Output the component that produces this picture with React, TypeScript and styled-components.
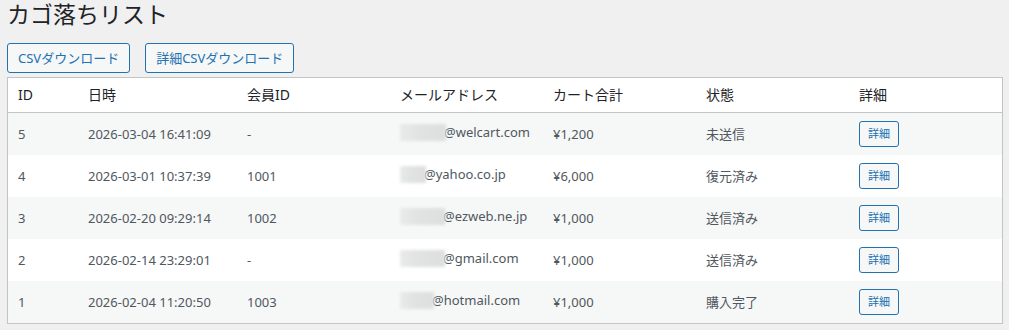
import React from "react";
import styled, { createGlobalStyle } from "styled-components";

const GlobalStyle = createGlobalStyle`
  body {
    margin: 0;
    background: #f0f0f1;
    font-family: "Noto Sans", "Noto Sans CJK JP", sans-serif;
    color: #3c434a;
  }
`;

const Wrap = styled.div`
  padding: 0 6px 0 7px;
`;

const Title = styled.h1`
  margin: 0;
  font-family: "Noto Sans", "Noto Sans CJK JP", sans-serif;
  font-size: 23px;
  font-weight: 400;
  line-height: 28px;
  color: #1d2327;
`;

const Actions = styled.div`
  display: flex;
  gap: 15px;
  margin-top: 15px;
`;

const Button = styled.button<{ $small?: boolean }>`
  box-sizing: border-box;
  height: ${(p) => (p.$small ? "26px" : "30px")};
  padding: ${(p) => (p.$small ? "0 8px" : "0 10px")};
  font-family: "Noto Sans", "Noto Sans CJK JP", sans-serif;
  font-size: ${(p) => (p.$small ? "11px" : "13px")};
  line-height: ${(p) => (p.$small ? "16px" : "18px")};
  color: #2271b1;
  background: #f6f7f7;
  border: 1px solid #2271b1;
  border-radius: 3px;
  cursor: pointer;
  white-space: nowrap;
`;

const Table = styled.table`
  width: 100%;
  margin-top: 4px;
  table-layout: fixed;
  border-collapse: separate;
  border-spacing: 0;
  background: #fff;
  border: 1px solid #c3c4c7;
  box-shadow: 0 1px 1px rgba(0, 0, 0, 0.04);
`;

const Th = styled.th`
  box-sizing: border-box;
  height: 35px;
  padding: 0 10px;
  text-align: left;
  font-weight: 400;
  font-size: 14px;
  line-height: 20px;
  color: #1d2327;
  border-bottom: 1px solid #c3c4c7;
`;

const Row = styled.tr<{ $striped: boolean }>`
  background: ${(p) => (p.$striped ? "#f6f7f7" : "#fff")};
`;

const Td = styled.td`
  box-sizing: border-box;
  height: 42px;
  padding: 0 10px;
  font-size: 13px;
  line-height: 18px;
  color: #50575e;
  vertical-align: middle;
  white-space: nowrap;
`;

const Email = styled.span`
  display: inline-flex;
  align-items: center;
`;

const Masked = styled.span<{ $w: number }>`
  position: relative;
  z-index: 1;
  display: inline-block;
  width: ${(p) => p.$w}px;
  height: 17px;
  margin-right: -2px;
  background: linear-gradient(90deg, #e9eaea 0%, #e1e2e2 40%, #dddede 100%);
  filter: blur(1.5px);
`;

const rows = [
  { id: 5, date: "2026-03-04 16:41:09", member: "-", mask: 46, domain: "@welcart.com", total: "¥1,200", status: "未送信" },
  { id: 4, date: "2026-03-01 10:37:39", member: "1001", mask: 26, domain: "@yahoo.co.jp", total: "¥6,000", status: "復元済み" },
  { id: 3, date: "2026-02-20 09:29:14", member: "1002", mask: 45, domain: "@ezweb.ne.jp", total: "¥1,000", status: "送信済み" },
  { id: 2, date: "2026-02-14 23:29:01", member: "-", mask: 45, domain: "@gmail.com", total: "¥1,000", status: "送信済み" },
  { id: 1, date: "2026-02-04 11:20:50", member: "1003", mask: 34, domain: "@hotmail.com", total: "¥1,000", status: "購入完了" },
];

export default function App() {
  return (
    <Wrap>
      <GlobalStyle />
      <Title>カゴ落ちリスト</Title>
      <Actions>
        <Button>CSVダウンロード</Button>
        <Button>詳細CSVダウンロード</Button>
      </Actions>
      <Table>
        <colgroup>
          <col style={{ width: 70 }} />
          <col style={{ width: 159 }} />
          <col />
          <col />
          <col />
          <col />
          <col />
        </colgroup>
        <thead>
          <tr>
            <Th>ID</Th>
            <Th>日時</Th>
            <Th>会員ID</Th>
            <Th>メールアドレス</Th>
            <Th>カート合計</Th>
            <Th>状態</Th>
            <Th>詳細</Th>
          </tr>
        </thead>
        <tbody>
          {rows.map((r, i) => (
            <Row key={r.id} $striped={i % 2 === 0}>
              <Td>{r.id}</Td>
              <Td>{r.date}</Td>
              <Td>{r.member}</Td>
              <Td>
                <Email>
                  <Masked $w={r.mask} />
                  {r.domain}
                </Email>
              </Td>
              <Td>{r.total}</Td>
              <Td>{r.status}</Td>
              <Td>
                <Button $small>詳細</Button>
              </Td>
            </Row>
          ))}
        </tbody>
      </Table>
    </Wrap>
  );
}
